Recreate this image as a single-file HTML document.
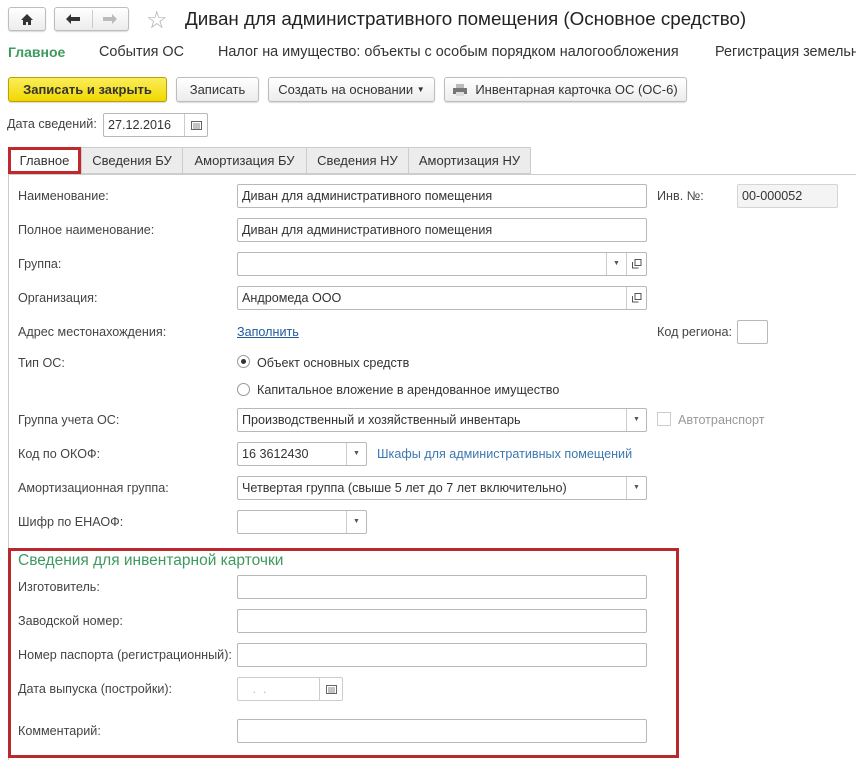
<!DOCTYPE html>
<html><head><meta charset="utf-8"><style>
body{margin:0;width:856px;height:760px;background:#fff;font-family:"Liberation Sans",Arial,sans-serif;color:#333;position:relative;overflow:hidden}
.a{position:absolute;white-space:nowrap}
.btn{position:absolute;border:1px solid #bdbdbd;border-radius:3px;background:linear-gradient(#fff,#ececec);box-shadow:0 1px 1px rgba(0,0,0,.15);font-size:13px;color:#333;display:flex;align-items:center;justify-content:center;box-sizing:border-box}
.lbl{position:absolute;font-size:12.6px;color:#444;white-space:nowrap;left:18px}
.in{position:absolute;border:1px solid #b8b8b8;border-radius:2px;box-sizing:border-box;height:24px;font-size:12.6px;line-height:22px;padding-left:4px;color:#333;background:#fff}
.dd{position:absolute;top:0;bottom:0;width:19px;border-left:1px solid #ccc;font-size:7px;color:#555;display:flex;align-items:center;justify-content:center}
.tab{position:absolute;top:147px;height:27px;box-sizing:border-box;border:1px solid #ccc;background:#ececec;font-size:13px;display:flex;align-items:center;justify-content:center;color:#333}
.cp{position:absolute;top:0;bottom:0;width:19px;border-left:1px solid #ccc;display:flex;align-items:center;justify-content:center}
</style></head><body>
<div class="btn" style="left:8px;top:7px;width:38px;height:24px"><svg width="12" height="11"><path d="M6 0L0 6h2v5h3V8h2v3h3V6h2z" fill="#333"/></svg></div>
<div class="btn" style="left:54px;top:7px;width:75px;height:24px;justify-content:flex-start"><svg style="margin-left:11px" width="14" height="10"><path d="M0 5L5 0v3h9v4H5v3z" fill="#333"/></svg><div style="position:absolute;left:37px;top:2px;bottom:2px;border-left:1px solid #ccc"></div><svg style="position:absolute;left:48px" width="14" height="10"><path d="M14 5L9 0v3H0v4h9v3z" fill="#bbb"/></svg></div>
<div class="a" style="left:146px;top:6px;font-size:24px;color:#aaa">☆</div>
<div class="a" style="left:185px;top:8px;font-size:18.8px;color:#222">Диван для административного помещения (Основное средство)</div>
<div class="a" style="left:8px;top:44px;font-size:14px;color:#3d9a5e;font-weight:bold">Главное</div>
<div class="a" style="left:99px;top:44px;font-size:14.4px">События ОС</div>
<div class="a" style="left:218px;top:44px;font-size:14.4px">Налог на имущество: объекты с особым порядком налогообложения</div>
<div class="a" style="left:715px;top:44px;font-size:14.4px">Регистрация земельных</div>
<div class="btn" style="left:8px;top:77px;width:159px;height:25px;background:linear-gradient(#fbed5a,#f1d800);border:1px solid #b7a200;font-weight:bold;color:#333">Записать и закрыть</div>
<div class="btn" style="left:176px;top:77px;width:83px;height:25px">Записать</div>
<div class="btn" style="left:268px;top:77px;width:167px;height:25px">Создать на основании&nbsp;<span style="font-size:8px">▼</span></div>
<div class="btn" style="left:444px;top:77px;width:243px;height:25px"><svg width="14" height="12" style="margin-right:8px"><rect x="3" y="0" width="8" height="4" fill="#bbb"/><rect x="0" y="4" width="14" height="6" fill="#777"/><rect x="3" y="8" width="8" height="4" fill="#ddd"/></svg>Инвентарная карточка ОС (ОС-6)</div>
<div class="a" style="left:7px;top:117px;font-size:12.6px;color:#444">Дата сведений:</div>
<div class="in" style="left:103px;top:113px;width:105px">27.12.2016<div class="cp" style="right:0;width:22px"><svg width="11" height="9"><rect x=".5" y=".5" width="10" height="8" fill="none" stroke="#666"/><path d="M2 3h7M2 5h7M2 7h7" stroke="#888"/></svg></div></div>
<div style="position:absolute;left:8px;right:0;top:174px;border-top:1px solid #ccc"></div>
<div style="position:absolute;left:8px;top:174px;bottom:0;border-left:1px solid #ccc"></div>
<div class="tab" style="left:8px;width:73px;background:#fff;border:3px solid #c0282d">Главное</div>
<div class="tab" style="left:81px;width:102px">Сведения БУ</div>
<div class="tab" style="left:182px;width:125px">Амортизация БУ</div>
<div class="tab" style="left:306px;width:103px">Сведения НУ</div>
<div class="tab" style="left:408px;width:123px">Амортизация НУ</div>

<div class="lbl" style="top:189px">Наименование:</div>
<div class="in" style="left:237px;top:184px;width:410px">Диван для административного помещения</div>
<div class="a" style="left:657px;top:189px;font-size:12.6px;color:#444">Инв. №:</div>
<div class="in" style="left:737px;top:184px;width:101px;background:#f4f4f4;border-color:#d5d5d5">00-000052</div>
<div class="lbl" style="top:223px">Полное наименование:</div>
<div class="in" style="left:237px;top:218px;width:410px">Диван для административного помещения</div>
<div class="lbl" style="top:257px">Группа:</div>
<div class="in" style="left:237px;top:252px;width:410px"><div class="dd" style="right:20px">▼</div><div class="cp" style="right:0"><svg width="10" height="10"><path d="M3 .5h6v6H3z M.5 3v6h6" fill="none" stroke="#555"/></svg></div></div>
<div class="lbl" style="top:291px">Организация:</div>
<div class="in" style="left:237px;top:286px;width:410px">Андромеда ООО<div class="cp" style="right:0"><svg width="10" height="10"><path d="M3 .5h6v6H3z M.5 3v6h6" fill="none" stroke="#555"/></svg></div></div>
<div class="lbl" style="top:325px">Адрес местонахождения:</div>
<div class="a" style="left:237px;top:325px;font-size:12.6px;color:#1f5aa0;text-decoration:underline">Заполнить</div>
<div class="a" style="left:657px;top:325px;font-size:12.6px;color:#444">Код региона:</div>
<div class="in" style="left:737px;top:320px;width:31px"></div>
<div class="lbl" style="top:356px">Тип ОС:</div>
<div class="a" style="left:237px;top:355px;width:13px;height:13px;border:1px solid #999;border-radius:50%;box-sizing:border-box;background:#fff"><div style="position:absolute;left:3px;top:3px;width:5px;height:5px;border-radius:50%;background:#333"></div></div>
<div class="a" style="left:257px;top:356px;font-size:12.6px">Объект основных средств</div>
<div class="a" style="left:237px;top:383px;width:13px;height:13px;border:1px solid #999;border-radius:50%;box-sizing:border-box"></div>
<div class="a" style="left:257px;top:383px;font-size:12.6px">Капитальное вложение в арендованное имущество</div>
<div class="lbl" style="top:413px">Группа учета ОС:</div>
<div class="in" style="left:237px;top:408px;width:410px">Производственный и хозяйственный инвентарь<div class="dd" style="right:0">▼</div></div>
<div class="a" style="left:657px;top:412px;width:14px;height:14px;border:1px solid #ccc;box-sizing:border-box"></div>
<div class="a" style="left:678px;top:413px;font-size:12.6px;color:#999">Автотранспорт</div>
<div class="lbl" style="top:447px">Код по ОКОФ:</div>
<div class="in" style="left:237px;top:442px;width:130px">16 3612430<div class="dd" style="right:0">▼</div></div>
<div class="a" style="left:377px;top:447px;font-size:12.6px;color:#3c78b0">Шкафы для административных помещений</div>
<div class="lbl" style="top:481px">Амортизационная группа:</div>
<div class="in" style="left:237px;top:476px;width:410px">Четвертая группа (свыше 5 лет до 7 лет включительно)<div class="dd" style="right:0">▼</div></div>
<div class="lbl" style="top:515px">Шифр по ЕНАОФ:</div>
<div class="in" style="left:237px;top:510px;width:130px"><div class="dd" style="right:0">▼</div></div>

<div style="position:absolute;left:8px;top:548px;width:671px;height:210px;border:3px solid #b8282d;box-sizing:border-box;background:#fff"></div>
<div class="a" style="left:18px;top:552px;font-size:15.5px;color:#3d9a5e">Сведения для инвентарной карточки</div>
<div class="lbl" style="top:580px">Изготовитель:</div>
<div class="in" style="left:237px;top:575px;width:410px"></div>
<div class="lbl" style="top:614px">Заводской номер:</div>
<div class="in" style="left:237px;top:609px;width:410px"></div>
<div class="lbl" style="top:648px">Номер паспорта (регистрационный):</div>
<div class="in" style="left:237px;top:643px;width:410px"></div>
<div class="lbl" style="top:682px">Дата выпуска (постройки):</div>
<div class="in" style="left:237px;top:677px;width:106px;color:#bbb;border-color:#ccc">&nbsp;&nbsp;&nbsp;.&nbsp;&nbsp;.<div class="cp" style="right:0;width:22px"><svg width="11" height="9"><rect x=".5" y=".5" width="10" height="8" fill="none" stroke="#666"/><path d="M2 3h7M2 5h7M2 7h7" stroke="#888"/></svg></div></div>
<div class="lbl" style="top:724px">Комментарий:</div>
<div class="in" style="left:237px;top:719px;width:410px"></div>
</body></html>
